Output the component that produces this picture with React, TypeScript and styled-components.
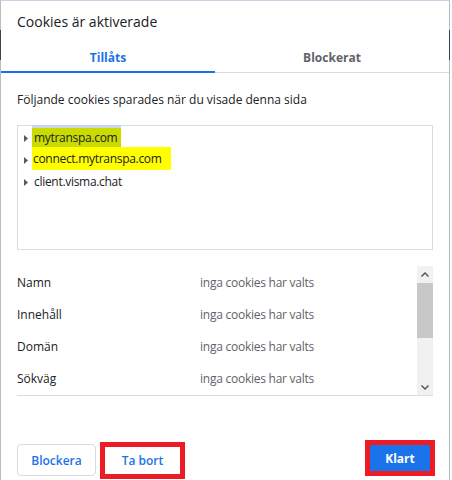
import React from "react";
import styled, { createGlobalStyle } from "styled-components";

const GlobalStyle = createGlobalStyle`
  html, body {
    margin: 0;
    padding: 0;
    background: #ffffff;
  }
  body {
    font-family: "Open Sans", "Segoe UI", "Noto Sans", sans-serif;
    color: #202124;
  }
  * {
    box-sizing: border-box;
  }
`;

const Dialog = styled.div`
  position: relative;
  width: 450px;
  height: 480px;
  background: #ffffff;
  border-top: 1px solid #c9d3e4;
  border-left: 1px solid #bcbcbc;
  border-right: 1px solid #bcbcbc;
  display: flex;
  flex-direction: column;

  &::before,
  &::after {
    content: "";
    position: absolute;
    top: 29px;
    width: 1px;
    height: 30px;
    background: #3c4350;
  }
  &::before {
    left: -1px;
  }
  &::after {
    right: -1px;
  }
`;

const Title = styled.h1`
  margin: 11px 0 0;
  padding: 0 16px;
  font-size: 14px;
  font-weight: 400;
  line-height: 20px;
  color: #202124;
`;

const TabStrip = styled.div`
  margin-top: 11px;
  display: grid;
  grid-template-columns: 214px 1fr;
  border-bottom: 1px solid #dadce0;
`;

const Tab = styled.div<{ $active?: boolean }>`
  height: 30px;
  margin-bottom: -1px;
  display: flex;
  align-items: center;
  justify-content: center;
  font-size: 12px;
  font-weight: 700;
  color: ${(p) => (p.$active ? "#1a73e8" : "#5f6368")};
  border-bottom: 2px solid ${(p) => (p.$active ? "#1a73e8" : "transparent")};
`;

const Body = styled.div`
  padding: 0 16px;
  display: flex;
  flex-direction: column;
`;

const Description = styled.p`
  margin: 18px 0 0;
  font-size: 12px;
  line-height: 18px;
  color: #202124;
`;

const Tree = styled.div`
  margin-top: 16px;
  height: 125px;
  border: 1px solid #dadce0;
  padding: 1px 0 0 6px;
  display: flex;
  flex-direction: column;
`;

const TreeRow = styled.div`
  height: 22px;
  display: flex;
  align-items: center;
  gap: 4px;
  font-size: 12px;
  letter-spacing: -0.3px;
  color: #202124;
`;

const Expander = styled.svg`
  width: 4px;
  height: 7px;
  flex: none;
  fill: #5a5a5a;
`;

const Site = styled.span<{ $mark?: "selected" | "marker" }>`
  display: inline-flex;
  align-items: center;
  padding: 0 2px;
  line-height: 18px;
  background: ${(p) =>
    p.$mark === "selected" ? "#c9db00" : p.$mark === "marker" ? "#ffff00" : "transparent"};
  ${(p) =>
    p.$mark === "selected" &&
    `
    height: 20px;
    padding-right: 4px;
    box-shadow: 0 -3px 0 #c9d6ec;
  `}
  ${(p) =>
    p.$mark === "marker" &&
    `
    height: 23px;
    margin-top: -3px;
    padding-left: 1px;
    padding-right: 9px;
  `}
`;

const Details = styled.div`
  margin-top: 16px;
  display: grid;
  grid-template-columns: 1fr 16px;
  border-bottom: 1px solid #dadce0;
`;

const DetailList = styled.div`
  display: flex;
  flex-direction: column;
`;

const DetailRow = styled.div`
  height: 32px;
  display: grid;
  grid-template-columns: 183px 1fr;
  align-items: center;
  font-size: 12px;
`;

const DetailLabel = styled.span`
  color: #202124;
`;

const DetailValue = styled.span`
  color: #5f6368;
  letter-spacing: -0.25px;
`;

const ScrollTrack = styled.div`
  height: 129px;
  background: #f1f1f1;
  display: grid;
  grid-template-rows: 17px 55px 1fr 16px;
`;

const ScrollArrow = styled.div`
  display: flex;
  align-items: center;
  justify-content: center;
  color: #505050;
`;

const ScrollThumb = styled.div`
  background: #c8c8c8;
`;

const Footer = styled.div`
  margin-top: auto;
  padding: 0 14px 1px 16px;
  display: flex;
  align-items: flex-end;
`;

const OutlineButton = styled.button`
  width: 79px;
  height: 32px;
  margin-bottom: 3px;
  border: 1px solid #dadce0;
  border-radius: 4px;
  background: #ffffff;
  color: #1a73e8;
  font-family: inherit;
  font-size: 12px;
  font-weight: 600;
  padding: 0;
`;

const Annotation = styled.div<{ $lift?: number }>`
  display: flex;
  border: 5px solid #ed1c24;
  margin-bottom: ${(p) => p.$lift ?? 0}px;
`;

const TextButton = styled.button`
  width: 75px;
  height: 27px;
  border: none;
  background: #ffffff;
  color: #1a73e8;
  font-family: inherit;
  font-size: 12px;
  font-weight: 600;
  padding: 0;
`;

const PrimaryButton = styled.button`
  width: 60px;
  height: 26px;
  border: none;
  background: #1a73e8;
  color: #ffffff;
  font-family: inherit;
  font-size: 12px;
  font-weight: 700;
  padding: 0;
`;

const Spacer = styled.div`
  flex: 1;
`;

const LeftGroup = styled.div`
  display: flex;
  align-items: flex-end;
  gap: 4px;
`;

const Chevron = ({ up }: { up?: boolean }) => (
  <svg width="8" height="5" viewBox="0 0 8 5">
    <path
      d={up ? "M0.5 4.5 L4 1 L7.5 4.5" : "M0.5 0.5 L4 4 L7.5 0.5"}
      fill="none"
      stroke="currentColor"
      strokeWidth="1.4"
    />
  </svg>
);

const sites: { name: string; mark?: "selected" | "marker" }[] = [
  { name: "mytranspa.com", mark: "selected" },
  { name: "connect.mytranspa.com", mark: "marker" },
  { name: "client.visma.chat" },
];

const fields = ["Namn", "Innehåll", "Domän", "Sökväg"];

export default function App() {
  return (
    <>
      <GlobalStyle />
      <Dialog>
        <Title>Cookies är aktiverade</Title>
        <TabStrip>
          <Tab $active>Tillåts</Tab>
          <Tab>Blockerat</Tab>
        </TabStrip>
        <Body>
          <Description>Följande cookies sparades när du visade denna sida</Description>
          <Tree>
            {sites.map((s) => (
              <TreeRow key={s.name}>
                <Expander viewBox="0 0 4 7">
                  <polygon points="0,0 4,3.5 0,7" />
                </Expander>
                <Site $mark={s.mark}>{s.name}</Site>
              </TreeRow>
            ))}
          </Tree>
          <Details>
            <DetailList>
              {fields.map((f) => (
                <DetailRow key={f}>
                  <DetailLabel>{f}</DetailLabel>
                  <DetailValue>inga cookies har valts</DetailValue>
                </DetailRow>
              ))}
            </DetailList>
            <ScrollTrack>
              <ScrollArrow>
                <Chevron up />
              </ScrollArrow>
              <ScrollThumb />
              <div />
              <ScrollArrow>
                <Chevron />
              </ScrollArrow>
            </ScrollTrack>
          </Details>
        </Body>
        <Footer>
          <LeftGroup>
            <OutlineButton>Blockera</OutlineButton>
            <Annotation>
              <TextButton>Ta bort</TextButton>
            </Annotation>
          </LeftGroup>
          <Spacer />
          <Annotation $lift={3}>
            <PrimaryButton>Klart</PrimaryButton>
          </Annotation>
        </Footer>
      </Dialog>
    </>
  );
}
